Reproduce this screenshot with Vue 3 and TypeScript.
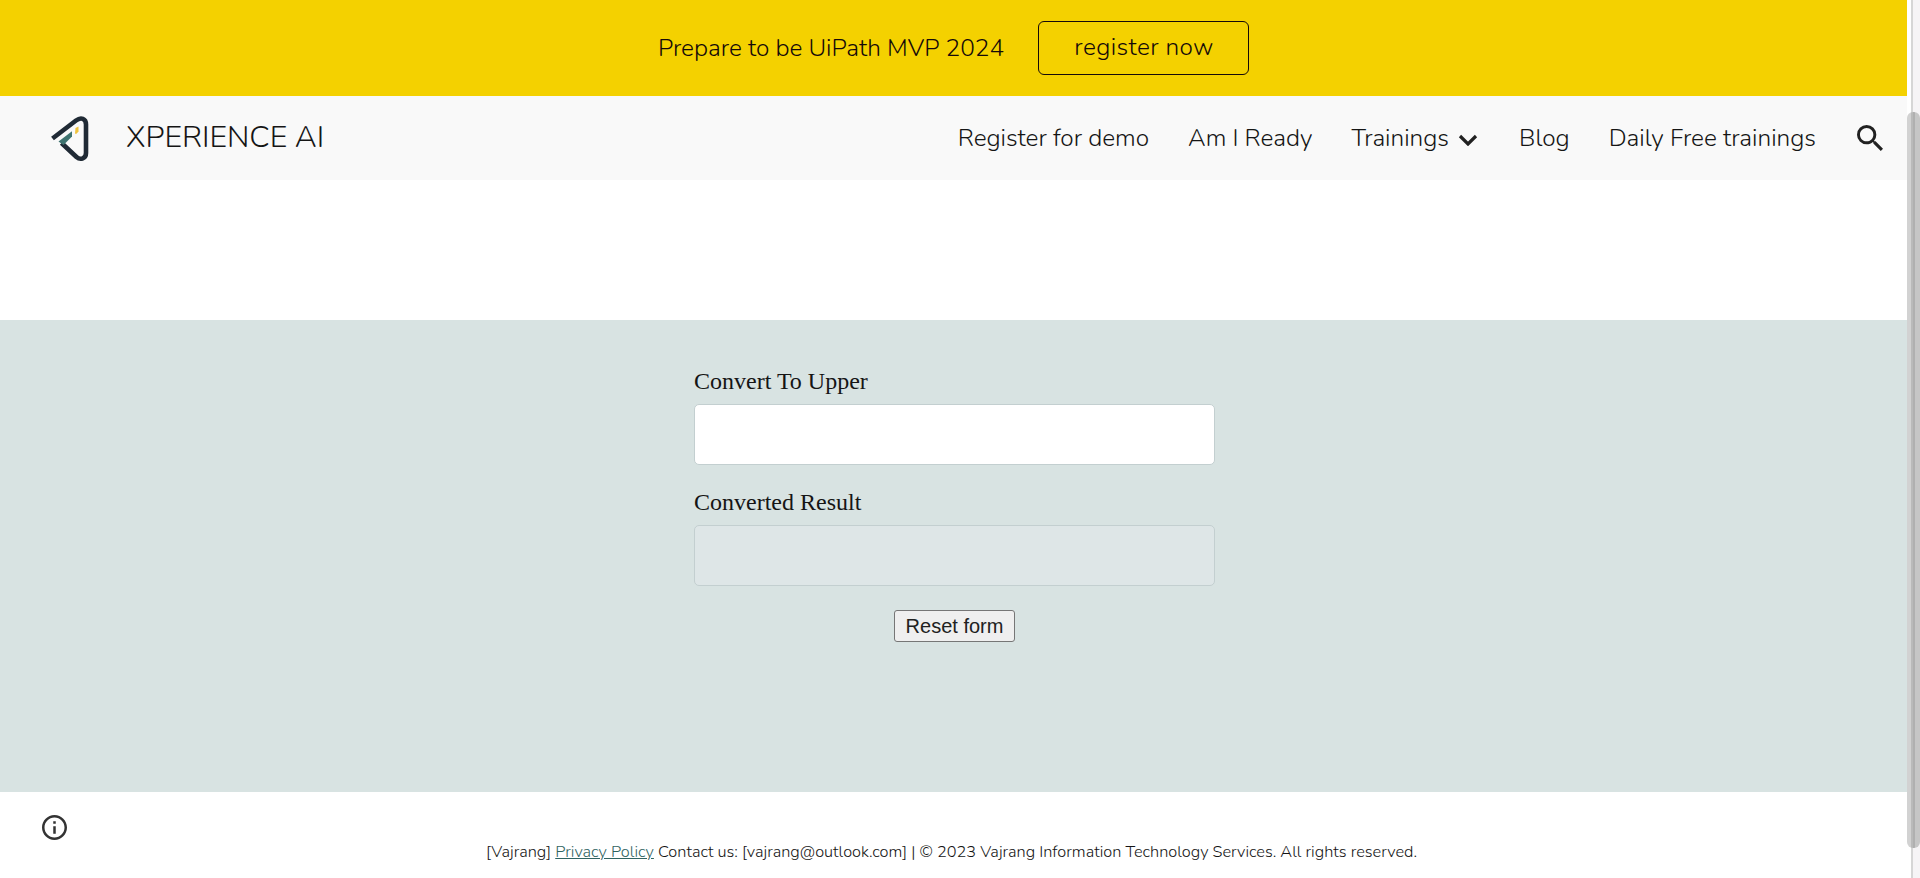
<script setup lang="ts">
import { ref, computed } from 'vue'

interface NavItem { label: string; menu?: boolean }

const nav: NavItem[] = [
  { label: 'Register for demo' },
  { label: 'Am I Ready' },
  { label: 'Trainings', menu: true },
  { label: 'Blog' },
  { label: 'Daily Free trainings' },
]

const source = ref('')
const result = computed(() => source.value.toUpperCase())
</script>

<template>
  <div class="page">
    <div class="content">
      <div class="banner">
        <span class="banner-text">Prepare to be UiPath MVP 2024</span>
        <a class="banner-button">register now</a>
      </div>

      <header class="header">
        <svg class="logo" viewBox="0 0 40 48" width="40" height="48">
          <path d="M2.500 24.500 26 6.500c5-3.800 10-2 10 4v28.500c0 5.500-5.500 7.500-9.500 4L11.500 29" fill="none" stroke="#202a35" stroke-width="4.600" stroke-linejoin="round" />
          <path d="M8.500 27.500 22 17.200v5.300l-8.500 8.500z" fill="#3e7370" />
          <path d="M25.500 14 28.500 12.500v5l-2 2.300h-1.500z" fill="#f0c33c" />
        </svg>
        <span class="title">XPERIENCE AI</span>
        <nav class="nav">
          <a v-for="item in nav" :key="item.label" class="nav-item" :class="{ 'has-menu': item.menu }">
            {{ item.label }}
            <svg v-if="item.menu" class="chevron" viewBox="0 0 20 12" width="20" height="12">
              <path d="m2 2 8 8 8-8" fill="none" stroke="#212121" stroke-width="3.200" />
            </svg>
          </a>
        </nav>
        <svg class="search" viewBox="3 3 17.490 17.490" width="26" height="26">
          <path fill="#212121" d="M15.500 14h-.79l-.28-.27A6.471 6.471 0 0 0 16 9.500 6.500 6.500 0 1 0 9.500 16c1.610 0 3.090-.59 4.230-1.570l.27.28v.79l5 4.990L20.490 19l-4.990-5zm-6 0C7.010 14 5 11.990 5 9.500S7.010 5 9.500 5 14 7.010 14 9.500 11.990 14 9.500 14z" />
        </svg>
      </header>

      <main class="converter">
        <form class="form" @submit.prevent>
          <label class="label" for="source">Convert To Upper</label>
          <input id="source" v-model="source" class="field" type="text">
          <label class="label second" for="result">Converted Result</label>
          <input id="result" class="field" type="text" :value="result" disabled>
          <button class="reset" type="button" @click="source = ''">Reset form</button>
        </form>
      </main>

      <footer class="footer">
        <svg class="info" viewBox="2 2 20 20" width="25" height="25">
          <path fill="#333" d="M11 7h2v2h-2zm0 4h2v6h-2zm1-9C6.480 2 2 6.480 2 12s4.480 10 10 10 10-4.480 10-10S17.520 2 12 2zm0 18c-4.410 0-8-3.590-8-8s3.590-8 8-8 8 3.590 8 8-3.590 8-8 8z" />
        </svg>
        <p class="legal">[Vajrang] <a class="link">Privacy Policy</a> Contact us: [vajrang@outlook.com] | © 2023 Vajrang Information Technology Services. All rights reserved.</p>
      </footer>
    </div>
    <div class="scrollbar"><div class="thumb"></div></div>
  </div>
</template>

<style>
body {
  overflow: hidden;
}
</style>

<style scoped>
.page {
  display: flex;
  height: 878px;
  background: #fff;
  color: #151515;
  font-family: Nunito, "Noto Sans", sans-serif;
  font-weight: 300;
  font-size: 24.400px;
}
.content {
  width: 1907px;
  display: flex;
  flex-direction: column;
}
.banner {
  height: 96px;
  flex: none;
  display: flex;
  align-items: center;
  justify-content: center;
  gap: 34px;
  background: #f4d100;
  color: #150909;
}
.banner-button {
  box-sizing: border-box;
  width: 211px;
  height: 54px;
  margin-bottom: 1px;
  padding-left: 1px;
  line-height: 51px;
  text-align: center;
  border: 1px solid #150909;
  border-radius: 6px;
  letter-spacing: 0.400px;
}
.header {
  box-sizing: border-box;
  height: 84px;
  flex: none;
  display: flex;
  align-items: center;
  padding: 0 24px 0 50px;
  background: #f9f9f9;
}
.logo {
  flex: none;
}
.title {
  margin-left: 36px;
  margin-top: -2px;
  font-size: 30.400px;
}
.nav {
  display: flex;
  gap: 39px;
  margin-left: auto;
}
.nav-item {
  display: flex;
  align-items: center;
  white-space: nowrap;
}
.has-menu {
  margin-right: 2px;
}
.chevron {
  margin: 4px 0 0 9px;
}
.search {
  margin: -1px 0 0 41px;
}
.converter {
  height: 472px;
  flex: none;
  margin-top: 140px;
  background: #d8e3e2;
}
.form {
  width: 521px;
  margin: 0 auto;
  padding-top: 45px;
  display: flex;
  flex-direction: column;
  position: relative;
  left: 1px;
}
.label {
  height: 39px;
  line-height: 32px;
  font-family: "Liberation Serif", serif;
  font-weight: 400;
  font-size: 24px;
}
.second {
  margin-top: 21px;
}
.field {
  box-sizing: border-box;
  width: 521px;
  height: 61px;
  padding: 0 12px;
  border: 1px solid #c3cfd0;
  border-radius: 5px;
  background: #fff;
  font: 24px "Liberation Sans", sans-serif;
}
.field:disabled {
  background: #dee6e7;
}
.reset {
  box-sizing: border-box;
  align-self: center;
  width: 121px;
  height: 32px;
  margin-top: 24px;
  padding: 0;
  border: 1px solid #767676;
  border-radius: 3px;
  background: #efefef;
  color: #212121;
  font: 20px/29px "Liberation Sans", sans-serif;
}
.footer {
  flex: 1;
  position: relative;
}
.info {
  position: absolute;
  left: 41.500px;
  top: 22.500px;
}
.legal {
  margin: 47px 0 0;
  padding-right: 4px;
  text-align: center;
  font-size: 16.320px;
  line-height: 26px;
}
.link {
  color: #2f6361;
  text-decoration: underline;
}
.scrollbar {
  box-sizing: border-box;
  width: 13px;
  padding-top: 112px;
  background: linear-gradient(90deg, #fff 4px, #d6d6d6 4px 6px, #f6f4f6 6px);
}
.thumb {
  height: 736px;
  border-radius: 6px;
  background: linear-gradient(90deg, #d2d2d2 4px, #bababa 4px 6px, #b0b0b0 6px 8px, #c6c6c6 8px);
}
</style>
